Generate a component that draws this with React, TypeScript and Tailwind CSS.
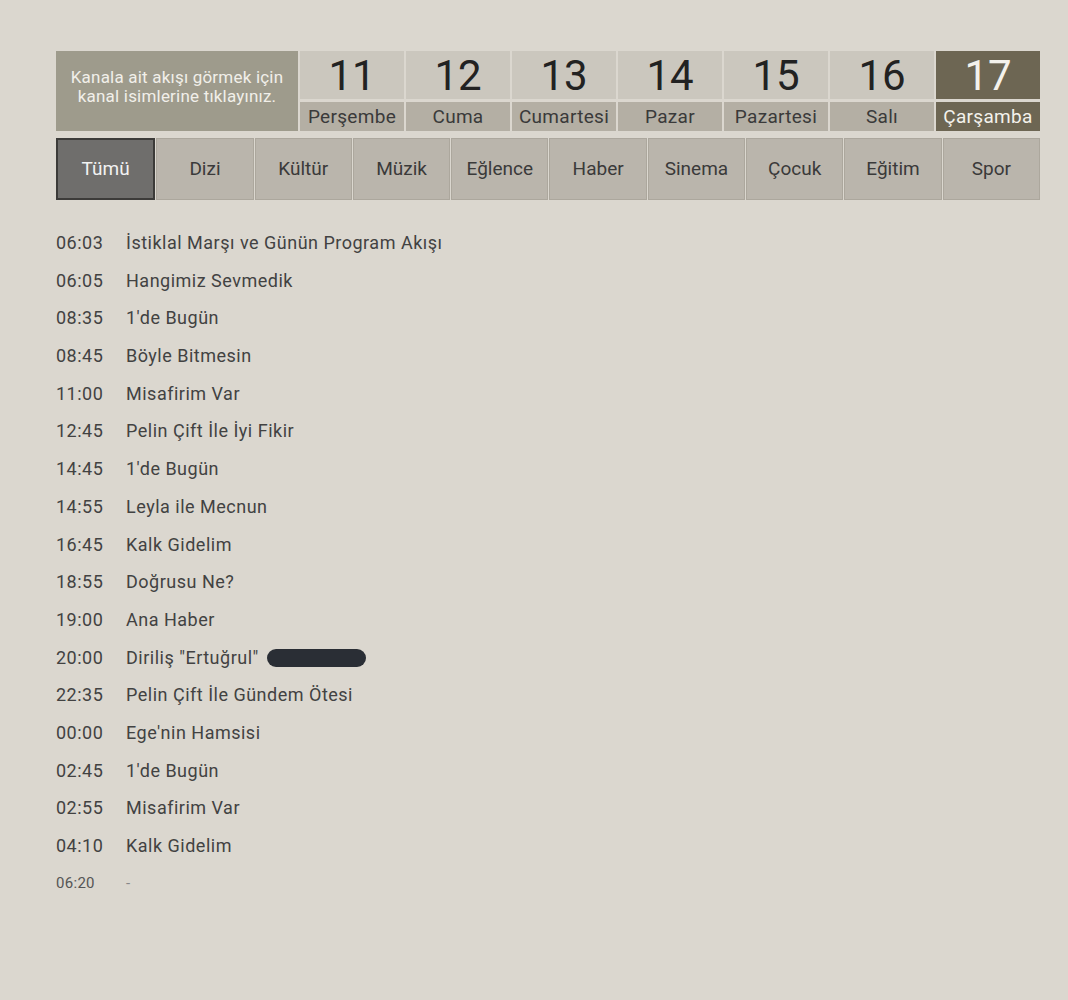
import React from 'react';

const DAYS = [
  { num: '11', name: 'Perşembe' },
  { num: '12', name: 'Cuma' },
  { num: '13', name: 'Cumartesi' },
  { num: '14', name: 'Pazar' },
  { num: '15', name: 'Pazartesi' },
  { num: '16', name: 'Salı' },
  { num: '17', name: 'Çarşamba', active: true },
];

const TABS = ['Tümü', 'Dizi', 'Kültür', 'Müzik', 'Eğlence', 'Haber', 'Sinema', 'Çocuk', 'Eğitim', 'Spor'];

const SCHEDULE = [
  ['06:03', 'İstiklal Marşı ve Günün Program Akışı'],
  ['06:05', 'Hangimiz Sevmedik'],
  ['08:35', "1'de Bugün"],
  ['08:45', 'Böyle Bitmesin'],
  ['11:00', 'Misafirim Var'],
  ['12:45', 'Pelin Çift İle İyi Fikir'],
  ['14:45', "1'de Bugün"],
  ['14:55', 'Leyla ile Mecnun'],
  ['16:45', 'Kalk Gidelim'],
  ['18:55', 'Doğrusu Ne?'],
  ['19:00', 'Ana Haber'],
  ['20:00', 'Diriliş "Ertuğrul"'],
  ['22:35', 'Pelin Çift İle Gündem Ötesi'],
  ['00:00', "Ege'nin Hamsisi"],
  ['02:45', "1'de Bugün"],
  ['02:55', 'Misafirim Var'],
  ['04:10', 'Kalk Gidelim'],
];

export default function App() {
  return (
    <div className="min-h-[1000px] w-full bg-[#dbd7cf] pt-[51px] pl-[56px] pr-[28px] font-['Roboto','Liberation_Sans',sans-serif] text-[#333]">
      {/* day selector */}
      <div className="flex h-[80px] gap-[2px]">
        <div className="flex w-[242px] items-center justify-center bg-[#9e9b8c] px-1 pb-2 text-center text-[17px] leading-[19px] tracking-[0.2px] text-[#f1efe9]">
          Kanala ait akışı görmek için
          <br />
          kanal isimlerine tıklayınız.
        </div>
        <div className="flex flex-1 gap-[2px]">
          {DAYS.map((d) => (
            <div key={d.num} className="flex flex-1 flex-col gap-[3px]">
              <div
                className={`flex h-[48px] items-center justify-center pt-[2px] text-[42px] leading-none ${
                  d.active ? 'bg-[#6d6653] text-[#f4f2ec]' : 'bg-[#cbc7be] text-[#222]'
                }`}
              >
                {d.num}
              </div>
              <div
                className={`flex flex-1 items-center justify-center text-[19px] tracking-[0.3px] leading-none ${
                  d.active ? 'bg-[#6d6653] text-[#f4f2ec]' : 'bg-[#b4afa4] text-[#3a3a3a]'
                }`}
              >
                {d.name}
              </div>
            </div>
          ))}
        </div>
      </div>

      {/* category tabs */}
      <div className="mt-[7px] flex h-[62px] gap-[1px]">
        {TABS.map((t, i) => (
          <div
            key={t}
            className={`flex flex-1 items-center justify-center text-[19px] ${
              i === 0
                ? 'border-2 border-[#3c3b39] bg-[#6f6e6c] text-[#f2f2f2]'
                : 'border border-[#aca79d] bg-[#bab5ac] text-[#3a3a3a]'
            }`}
          >
            {t}
          </div>
        ))}
      </div>

      {/* schedule */}
      <div className="mt-[29px] flex flex-col text-[18px] tracking-[0.5px] text-[#424242]">
        {SCHEDULE.map(([time, title], i) => (
          <div key={i} className="flex h-[37.7px] items-start">
            <span className="w-[70px]">{time}</span>
            <span>{title}</span>
            {time === '20:00' && (
              <span className="ml-[8px] mt-[5px] inline-block h-[18px] w-[99px] rounded-full bg-[#2a2e35]" />
            )}
          </div>
        ))}
        <div className="flex h-[30px] items-start pt-[2px] text-[15px] tracking-[0.3px] text-[#555]">
          <span className="w-[70px]">06:20</span>
          <span className="text-[#888]">-</span>
        </div>
      </div>
    </div>
  );
}
